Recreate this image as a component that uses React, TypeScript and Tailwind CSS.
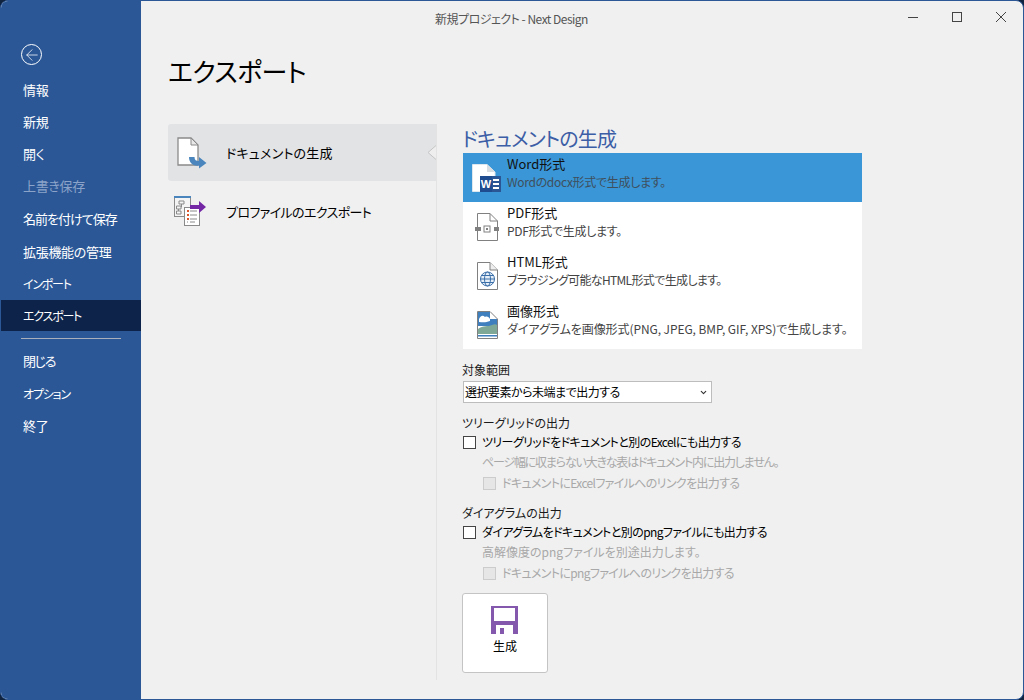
import { ArrowLeft, ChevronDown } from 'lucide-react'

const navTop = [
  { label: '情報', h: 'h-[31px]' },
  { label: '新規', h: 'h-[33px]' },
  { label: '開く', h: 'h-[31px]' },
  { label: '上書き保存', h: 'h-[33px]', disabled: true },
  { label: '名前を付けて保存', h: 'h-[33px]', text: 'text-[13px] tracking-[-1px]' },
  { label: '拡張機能の管理', h: 'h-[33px]' },
  { label: 'インポート', h: 'h-[32px]', text: 'text-[12px] tracking-[-1.2px]' },
  { label: 'エクスポート', h: 'h-[31px]', active: true, text: 'text-[12px] tracking-[-1.2px]' },
]

const navBottom = [
  { label: '閉じる', h: 'h-[32px]', text: 'text-[13px] tracking-[-1.3px]' },
  { label: 'オプション', h: 'h-[33px]', text: 'text-[12px] tracking-[-1.2px]' },
  { label: '終了', h: 'h-[31px]' },
]

type NavItemProps = { label: string; h: string; disabled?: boolean; active?: boolean; text?: string }

function NavItem({ label, h, disabled, active, text = 'text-[13px] tracking-[-0.3px]' }: NavItemProps) {
  return (
    <div
      className={`${h} ${text} flex items-center pl-[22px] ${
        active ? 'bg-[#0e2349] text-white' : disabled ? 'text-[#8ba3c8]' : 'text-white'
      }`}
    >
      {label}
    </div>
  )
}

function GenerateIcon() {
  return (
    <svg width="32" height="32" viewBox="0 0 32 32">
      <path d="M1 1H14L21 8V28H1Z" fill="#fff" stroke="#8a8a8a" strokeWidth="1.3" />
      <path d="M14 1V8H21Z" fill="#e8e8e8" stroke="#8a8a8a" strokeWidth="1" />
      <path d="M12 20H17.5C17.5 23 19 24 22 24V20L29.5 26L22 31.5V28.5C16 29.5 12 26 12 20Z" fill="#4a86bd" />
    </svg>
  )
}

function ProfileIcon() {
  return (
    <svg width="32" height="32" viewBox="0 0 32 32">
      <rect x="0.5" y="1.5" width="16" height="19" fill="#f4f4f4" stroke="#8a8a8a" />
      <rect x="0" y="0" width="17" height="2" fill="#4a86bd" />
      <path d="M5 5H10V8H5Z M2.5 10H7V13H2.5Z M2.5 15H7V18H2.5Z M7.5 8V11H7 M4.5 13V15" fill="none" stroke="#8a8a8a" />
      <rect x="10.5" y="11.5" width="15" height="18" fill="#fff" stroke="#8a8a8a" />
      <path d="M13 14h2v2h-2z M13 18h2v2h-2z M13 22h2v2h-2z" fill="#d9572b" />
      <path d="M16 15h7 M16 19h7 M16 23h7 M13 26h1 M16 26h5" stroke="#8a8a8a" />
      <path d="M16 9H25V5L32 11L25 17V13H16Z" fill="#7327a5" />
    </svg>
  )
}

function WordIcon() {
  return (
    <svg width="30" height="30" viewBox="0 0 30 30">
      <path d="M0.5 1.5H15L23 9V28.5H0.5Z" fill="#fff" stroke="#dfe7ee" />
      <path d="M15 1.5V9H23Z" fill="#d8dde2" />
      <rect x="15" y="13" width="14" height="16" fill="#2b5695" />
      <path d="M21 16h6v2h-6z M21 20h6v2h-6z M21 24h6v2h-6z" fill="#fff" />
      <rect x="8" y="13" width="12" height="16" fill="#1e4c8f" />
      <text x="14" y="25" textAnchor="middle" fontSize="11" fontWeight="700" fill="#fff" fontFamily="Liberation Sans, sans-serif">W</text>
    </svg>
  )
}

function PdfIcon() {
  return (
    <svg width="24" height="30" viewBox="0 0 24 30">
      <path d="M2.5 1.5H15L22.5 9V28.5H2.5Z" fill="#fff" stroke="#808080" />
      <path d="M15 1.5V9H22.5" fill="none" stroke="#808080" />
      <rect x="0" y="15" width="6" height="4" fill="#808080" />
      <rect x="19" y="15" width="5" height="4" fill="#808080" />
      <rect x="9" y="14" width="6" height="6" fill="#fff" stroke="#808080" />
      <rect x="11" y="16" width="2" height="2" fill="#808080" />
    </svg>
  )
}

function HtmlIcon() {
  return (
    <svg width="24" height="30" viewBox="0 0 24 30">
      <path d="M2.5 1.5H15L22.5 9V28.5H2.5Z" fill="#fff" stroke="#808080" />
      <path d="M15 1.5V9H22.5" fill="#eee" stroke="#808080" />
      <circle cx="12.5" cy="18" r="7" fill="#e6eff8" stroke="#3a6ea8" />
      <ellipse cx="12.5" cy="18" rx="3" ry="7" fill="none" stroke="#3a6ea8" />
      <path d="M5.5 18h14 M6.5 14.5h12 M6.5 21.5h12" stroke="#3a6ea8" />
    </svg>
  )
}

function ImageIcon() {
  return (
    <svg width="24" height="30" viewBox="0 0 24 30">
      <path d="M2.5 1.5H15L22.5 9V28.5H2.5Z" fill="#fff" stroke="#808080" />
      <path d="M3 2H15V9H22V16H3Z" fill="#3f7fbe" />
      <path d="M4 9C6 5 8 5 10 7C12 6 14 7 15 9V11C10 13 7 12 4 12Z" fill="#fff" />
      <path d="M3 19C8 15 13 17 17 15C19 14 21 14 22 15V24H3Z" fill="#7fa896" />
      <rect x="3" y="25" width="19" height="1.5" fill="#3f7fbe" />
    </svg>
  )
}

const formats = [
  { title: 'Word形式', desc: 'Wordのdocx形式で生成します。', icon: <WordIcon />, selected: true, track: 'tracking-[-0.3px]' },
  { title: 'PDF形式', desc: 'PDF形式で生成します。', icon: <PdfIcon />, track: 'tracking-[-0.3px]' },
  { title: 'HTML形式', desc: 'ブラウジング可能なHTML形式で生成します。', icon: <HtmlIcon />, track: 'tracking-[-0.65px]' },
  { title: '画像形式', desc: 'ダイアグラムを画像形式(PNG, JPEG, BMP, GIF, XPS)で生成します。', icon: <ImageIcon />, track: 'tracking-[-0.08px]' },
]

function CheckBox({ disabled }: { disabled?: boolean }) {
  return (
    <span
      className={`h-[13px] w-[13px] shrink-0 border ${
        disabled ? 'border-[#cccccc] bg-[#e6e6e6]' : 'border-[#444444] bg-white'
      }`}
    />
  )
}

type OutputGroupProps = {
  title: string
  main: string
  note: string
  noteTrack: string
  link: string
}

function OutputGroup({ title, main, note, noteTrack, link }: OutputGroupProps) {
  return (
    <div className="flex flex-col text-[12px] leading-[20px]">
      <div className="h-[19px] text-[#1a1a1a]">{title}</div>
      <div className="ml-px flex items-center gap-[6px] tracking-[-0.6px] text-black">
        <CheckBox />
        {main}
      </div>
      <div className={`ml-[20px] text-[#a8a8a8] ${noteTrack}`}>{note}</div>
      <div className="ml-[21px] mt-px flex items-center gap-[6px] tracking-[-0.65px] text-[#a8a8a8]">
        <CheckBox disabled />
        {link}
      </div>
    </div>
  )
}

export default function App() {
  return (
    <div className="h-[700px] w-[1024px] overflow-hidden bg-[#10233f] font-['Noto_Sans_CJK_JP','Liberation_Sans',sans-serif] [font-feature-settings:'palt']">
      <div className="flex h-[700px] w-[1024px] overflow-hidden rounded-[8px] border border-[#2b5797] bg-[#f0f0f0]">
        <aside className="flex w-[140px] shrink-0 flex-col bg-[#2b5797]">
          <div className="ml-[20px] mt-[43px] flex h-[21px] w-[21px] items-center justify-center rounded-full border border-white">
            <ArrowLeft className="h-[18px] w-[18px] text-white" strokeWidth={1} />
          </div>
          <nav className="mt-[9px] flex flex-col">
            {navTop.map((item) => (
              <NavItem key={item.label} {...item} />
            ))}
            <div className="ml-[20px] mt-[7px] h-px w-[100px] bg-[#a9b0bb]" />
            <div className="mt-[6px] flex flex-col">
              {navBottom.map((item) => (
                <NavItem key={item.label} {...item} />
              ))}
            </div>
          </nav>
        </aside>

        <main className="flex min-w-0 flex-1 flex-col">
          <header className="relative flex h-[36px] shrink-0 items-center justify-center text-[12px] tracking-[-0.5px] text-[#555555]">
            <span className="mr-[141px]">新規プロジェクト - Next Design</span>
            <div className="absolute right-0 top-0 flex h-[33px] items-center text-[#444444]">
              <svg width="44" height="33" viewBox="0 0 44 33"><path d="M17 16.5H27" stroke="currentColor" /></svg>
              <svg width="44" height="33" viewBox="0 0 44 33"><rect x="17.5" y="11.5" width="9" height="9" fill="none" stroke="currentColor" /></svg>
              <svg width="44" height="33" viewBox="0 0 44 33"><path d="M17 11L27 21M27 11L17 21" stroke="currentColor" /></svg>
            </div>
          </header>

          <h1 className="ml-[27px] mt-[13px] text-[26px] font-normal leading-[42px] tracking-[-0.6px] text-black">エクスポート</h1>

          <div className="mt-[32px] flex min-h-0 flex-1 pb-[19px]">
            <div className="ml-[27px] flex w-[268px] shrink-0 flex-col gap-[2px]">
              <div className="relative flex h-[57px] items-center rounded-l-[3px] bg-[#e2e3e5] pl-[9px]">
                <GenerateIcon />
                <span className="ml-[17px] text-[13px] tracking-[0.2px] text-black">ドキュメントの生成</span>
                <svg className="absolute right-0 top-[21px]" width="9" height="15" viewBox="0 0 9 15">
                  <path d="M9 0.5L1 7.5L9 14.5" fill="#eeeeee" stroke="#c4c4c4" />
                </svg>
              </div>
              <div className="flex h-[57px] items-center pl-[6px]">
                <ProfileIcon />
                <span className="ml-[20px] text-[13px] tracking-[-0.6px] text-black">プロファイルのエクスポート</span>
              </div>
            </div>

            <div className="flex flex-1 flex-col border-l border-[#e3e3e3] pl-[25px]">
              <h2 className="h-[29px] text-[20px] font-normal leading-[30px] tracking-[-0.8px] text-[#3c5ea6]">ドキュメントの生成</h2>

              <ul className="ml-px w-[399px] bg-white">
                {formats.map((f) => (
                  <li
                    key={f.title}
                    className={`flex h-[49px] items-center pb-[10px] text-[12px] leading-[18px] ${
                      f.selected ? 'bg-[#3a96d6]' : ''
                    }`}
                  >
                    <div className="mt-[10px] flex w-[44px] shrink-0 justify-center pl-[3px]">{f.icon}</div>
                    <div className="flex flex-col">
                      <span className="text-[13px] text-[#111111]">{f.title}</span>
                      <span className={`${f.track} ${f.selected ? 'text-[#3f4f5c]' : 'text-[#444444]'}`}>{f.desc}</span>
                    </div>
                  </li>
                ))}
              </ul>

              <div className="mt-[11px] text-[12px] leading-[20px] text-[#1a1a1a]">対象範囲</div>
              <div className="ml-px mt-px flex h-[22px] w-[249px] items-center justify-between border border-[#bdbdbd] bg-white pl-px pr-[3px] text-[12px] tracking-[-0.5px] text-black">
                <span>選択要素から未端まで出力する</span>
                <ChevronDown className="h-[9px] w-[9px] text-[#333333]" strokeWidth={3} />
              </div>

              <div className="mt-[10px]">
                <OutputGroup
                  title="ツリーグリッドの出力"
                  main="ツリーグリッドをドキュメントと別のExcelにも出力する"
                  note="ページ幅に収まらない大きな表はドキュメント内に出力しません。"
                  noteTrack="tracking-[-1.2px]"
                  link="ドキュメントにExcelファイルへのリンクを出力する"
                />
              </div>
              <div className="mt-[10px]">
                <OutputGroup
                  title="ダイアグラムの出力"
                  main="ダイアグラムをドキュメントと別のpngファイルにも出力する"
                  note="高解像度のpngファイルを別途出力します。"
                  noteTrack="tracking-normal"
                  link="ドキュメントにpngファイルへのリンクを出力する"
                />
              </div>

              <button className="mt-[10px] flex h-[80px] w-[86px] flex-col items-center rounded-[3px] border border-[#c4c4c4] bg-white pt-[12px]">
                <svg className="mr-[2px]" width="27" height="28" viewBox="0 0 27 28">
                  <path d="M0 0H27V28H0Z" fill="#8458ad" />
                  <rect x="3" y="2" width="21" height="13" fill="#fff" />
                  <rect x="5" y="19" width="17" height="9" fill="#fff" />
                  <rect x="9" y="22" width="4" height="6" fill="#8458ad" />
                </svg>
                <span className="mt-[3px] text-[12px] text-black">生成</span>
              </button>
            </div>
          </div>
        </main>
      </div>
    </div>
  )
}
